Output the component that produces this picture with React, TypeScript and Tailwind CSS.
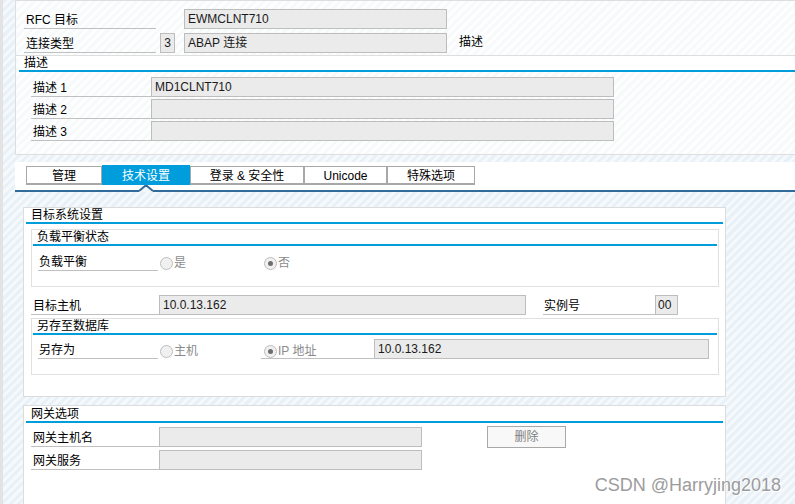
import type { ReactNode } from "react";

const HATCH =
  "bg-[repeating-linear-gradient(135deg,#e9f1f8_0px,#e9f1f8_3px,#f6f9fc_3px,#f6f9fc_6px)]";
const FAINT =
  "bg-[repeating-linear-gradient(135deg,#f7f9fb_0px,#f7f9fb_3px,#fdfefe_3px,#fdfefe_6px)]";

function Field({ className, children }: { className: string; children?: ReactNode }) {
  return (
    <div
      className={`h-[20px] shrink-0 border border-[#bdbdbd] bg-[#ebebeb] px-[3px] text-[12px] leading-[19px] text-[#1a1a1a] ${className}`}
    >
      {children}
    </div>
  );
}

function Label({ className, children }: { className: string; children: ReactNode }) {
  return (
    <div className={`h-[20px] shrink-0 border-b border-[#c0c0c0] pl-[2px] leading-[22px] ${className}`}>
      {children}
    </div>
  );
}

function GroupTitle({ children, className }: { children: ReactNode; className: string }) {
  return (
    <div className={`flex items-end border-b-2 border-[#009ddc] bg-white pb-[1px] leading-none ${className}`}>
      {children}
    </div>
  );
}

function Radio({ checked, label }: { checked?: boolean; label: string }) {
  return (
    <div className="mt-[3px] flex items-center text-[#8a8a8a]">
      <span className="flex size-[13px] items-center justify-center rounded-full border border-[#bdbdbd] bg-[#f0f0f0]">
        {checked && <span className="size-[5px] rounded-full bg-[#6e6e6e]" />}
      </span>
      <span className="ml-[1px]">{label}</span>
    </div>
  );
}

const TABS = [
  { name: "管理", w: "w-[76px]" },
  { name: "技术设置", w: "w-[88px]", active: true },
  { name: "登录 & 安全性", w: "w-[114px]" },
  { name: "Unicode", w: "w-[83px]" },
  { name: "特殊选项", w: "w-[88px]" },
];

export default function App() {
  return (
    <div
      className={`relative flex h-[504px] w-[795px] flex-col overflow-hidden border-l-[3px] border-[#e3e3e3] pl-[12px] font-['Liberation_Sans','Noto_Sans_CJK_SC',sans-serif] text-[12px] text-black ${HATCH}`}
    >
      {/* header panel */}
      <div className={`h-[155px] shrink-0 border-y border-l border-[#dedede] ${FAINT}`}>
        <div className="flex flex-col gap-[2px] border-b border-[#dedede] px-[8px] pt-[8px] pb-[2px]">
          <div className="flex">
            <Label className="w-[132px]">RFC 目标</Label>
            <Field className="ml-[28px] w-[263px]">EWMCLNT710</Field>
          </div>
          <div className="flex items-end">
            <Label className="w-[132px]">连接类型</Label>
            <Field className="ml-[4px] w-[15px] text-center !px-0">3</Field>
            <Field className="ml-[9px] w-[263px]">ABAP 连接</Field>
            <div className="ml-[12px] leading-[22px]">描述</div>
          </div>
        </div>
        <GroupTitle className="ml-[3px] h-[16px] pl-[5px]">描述</GroupTitle>
        <div className="flex flex-col gap-[2px] pt-[5px] pl-[15px]">
          {["MD1CLNT710", "", ""].map((v, i) => (
            <div key={i} className="flex">
              <Label className="w-[120px]">描述 {i + 1}</Label>
              <Field className="w-[463px]">{v}</Field>
            </div>
          ))}
        </div>
      </div>

      {/* tab strip */}
      <div className="relative mt-[7px] h-[30px] shrink-0 border-b-2 border-[#316b99] bg-white pt-[3px] pl-[11px]">
        <div className="flex">
          {TABS.map((t) =>
            t.active ? (
              <div
                key={t.name}
                className={`flex h-[20px] items-center justify-center bg-[#009ddc] pt-[1px] text-[12px] text-white ${t.w}`}
              >
                {t.name}
              </div>
            ) : (
              <div
                key={t.name}
                className={`mt-[1px] flex h-[19px] items-center justify-center border border-b-2 border-[#a8a8a8] pt-[1px] text-[12px] ${t.w}`}
              >
                {t.name}
              </div>
            ),
          )}
        </div>
        <svg className="absolute bottom-[-2px] left-[124px]" width="14" height="8" viewBox="0 0 14 8">
          <polygon points="0,8 7,2 14,8" fill="#f3f7fa" />
          <rect x="0" y="6" width="14" height="2" fill="#f3f7fa" />
          <polyline points="0,7 6,2 8,2 14,7" fill="none" stroke="#316b99" strokeWidth="2" />
        </svg>
      </div>

      {/* target system panel */}
      <div className="mt-[15px] ml-[8px] flex h-[190px] w-[703px] shrink-0 flex-col border border-[#dcdcdc] bg-white px-[2px]">
        <GroupTitle className="h-[16px] pl-[5px]">目标系统设置</GroupTitle>
        <div className="mt-[5px] ml-[5px] h-[58px] w-[688px] border border-[#e0e0e0] px-[1px]">
          <GroupTitle className="h-[16px] pl-[4px]">负载平衡状态</GroupTitle>
          <div className="mt-[5px] flex items-start">
            <Label className="ml-[5px] w-[120px] !pl-[1px]">负载平衡</Label>
            <div className="ml-[2px] w-[104px]">
              <Radio label="是" />
            </div>
            <Radio checked label="否" />
          </div>
        </div>

        <div className="mt-[8px] flex">
          <Label className="ml-[5px] w-[128px]">目标主机</Label>
          <Field className="w-[367px]">10.0.13.162</Field>
          <Label className="ml-[17px] w-[112px] !pl-[1px]">实例号</Label>
          <Field className="w-[23px] !px-[2px]">00</Field>
        </div>

        <div className="mt-[3px] ml-[5px] h-[57px] w-[688px] border border-[#e0e0e0] px-[1px]">
          <GroupTitle className="h-[16px] pl-[4px]">另存至数据库</GroupTitle>
          <div className="mt-[4px] flex items-start">
            <Label className="ml-[5px] w-[120px] !pl-[1px]">另存为</Label>
            <div className="ml-[2px] w-[101px]">
              <Radio label="主机" />
            </div>
            <div className="h-[20px] w-[113px] border-b border-[#c0c0c0] pl-[3px]">
              <Radio checked label="IP 地址" />
            </div>
            <Field className="w-[335px]">10.0.13.162</Field>
          </div>
        </div>
      </div>

      {/* gateway panel */}
      <div className="mt-[8px] ml-[8px] flex w-[703px] flex-1 flex-col border-x border-t border-[#dcdcdc] bg-white px-[2px]">
        <GroupTitle className="h-[17px] pl-[5px]">网关选项</GroupTitle>
        <div className="mt-[4px] flex flex-col gap-[2px]">
          <div className="flex">
            <Label className="ml-[5px] w-[128px]">网关主机名</Label>
            <Field className="w-[263px]" />
            <button
              type="button"
              className="-mt-[1px] ml-[65px] h-[22px] w-[79px] border border-[#a8a8a8] bg-[#f8f8f8] text-[12px] text-[#808080]"
            >
              删除
            </button>
          </div>
          <div className="flex">
            <Label className="ml-[5px] w-[128px]">网关服务</Label>
            <Field className="w-[263px]" />
          </div>
        </div>
      </div>

      <div className="absolute right-[14px] bottom-[10px] font-['Liberation_Sans',sans-serif] text-[18px] leading-none text-[#9c9c9c] [text-shadow:1px_1px_0_#ffffff]">
        CSDN @Harryjing2018
      </div>
    </div>
  );
}
